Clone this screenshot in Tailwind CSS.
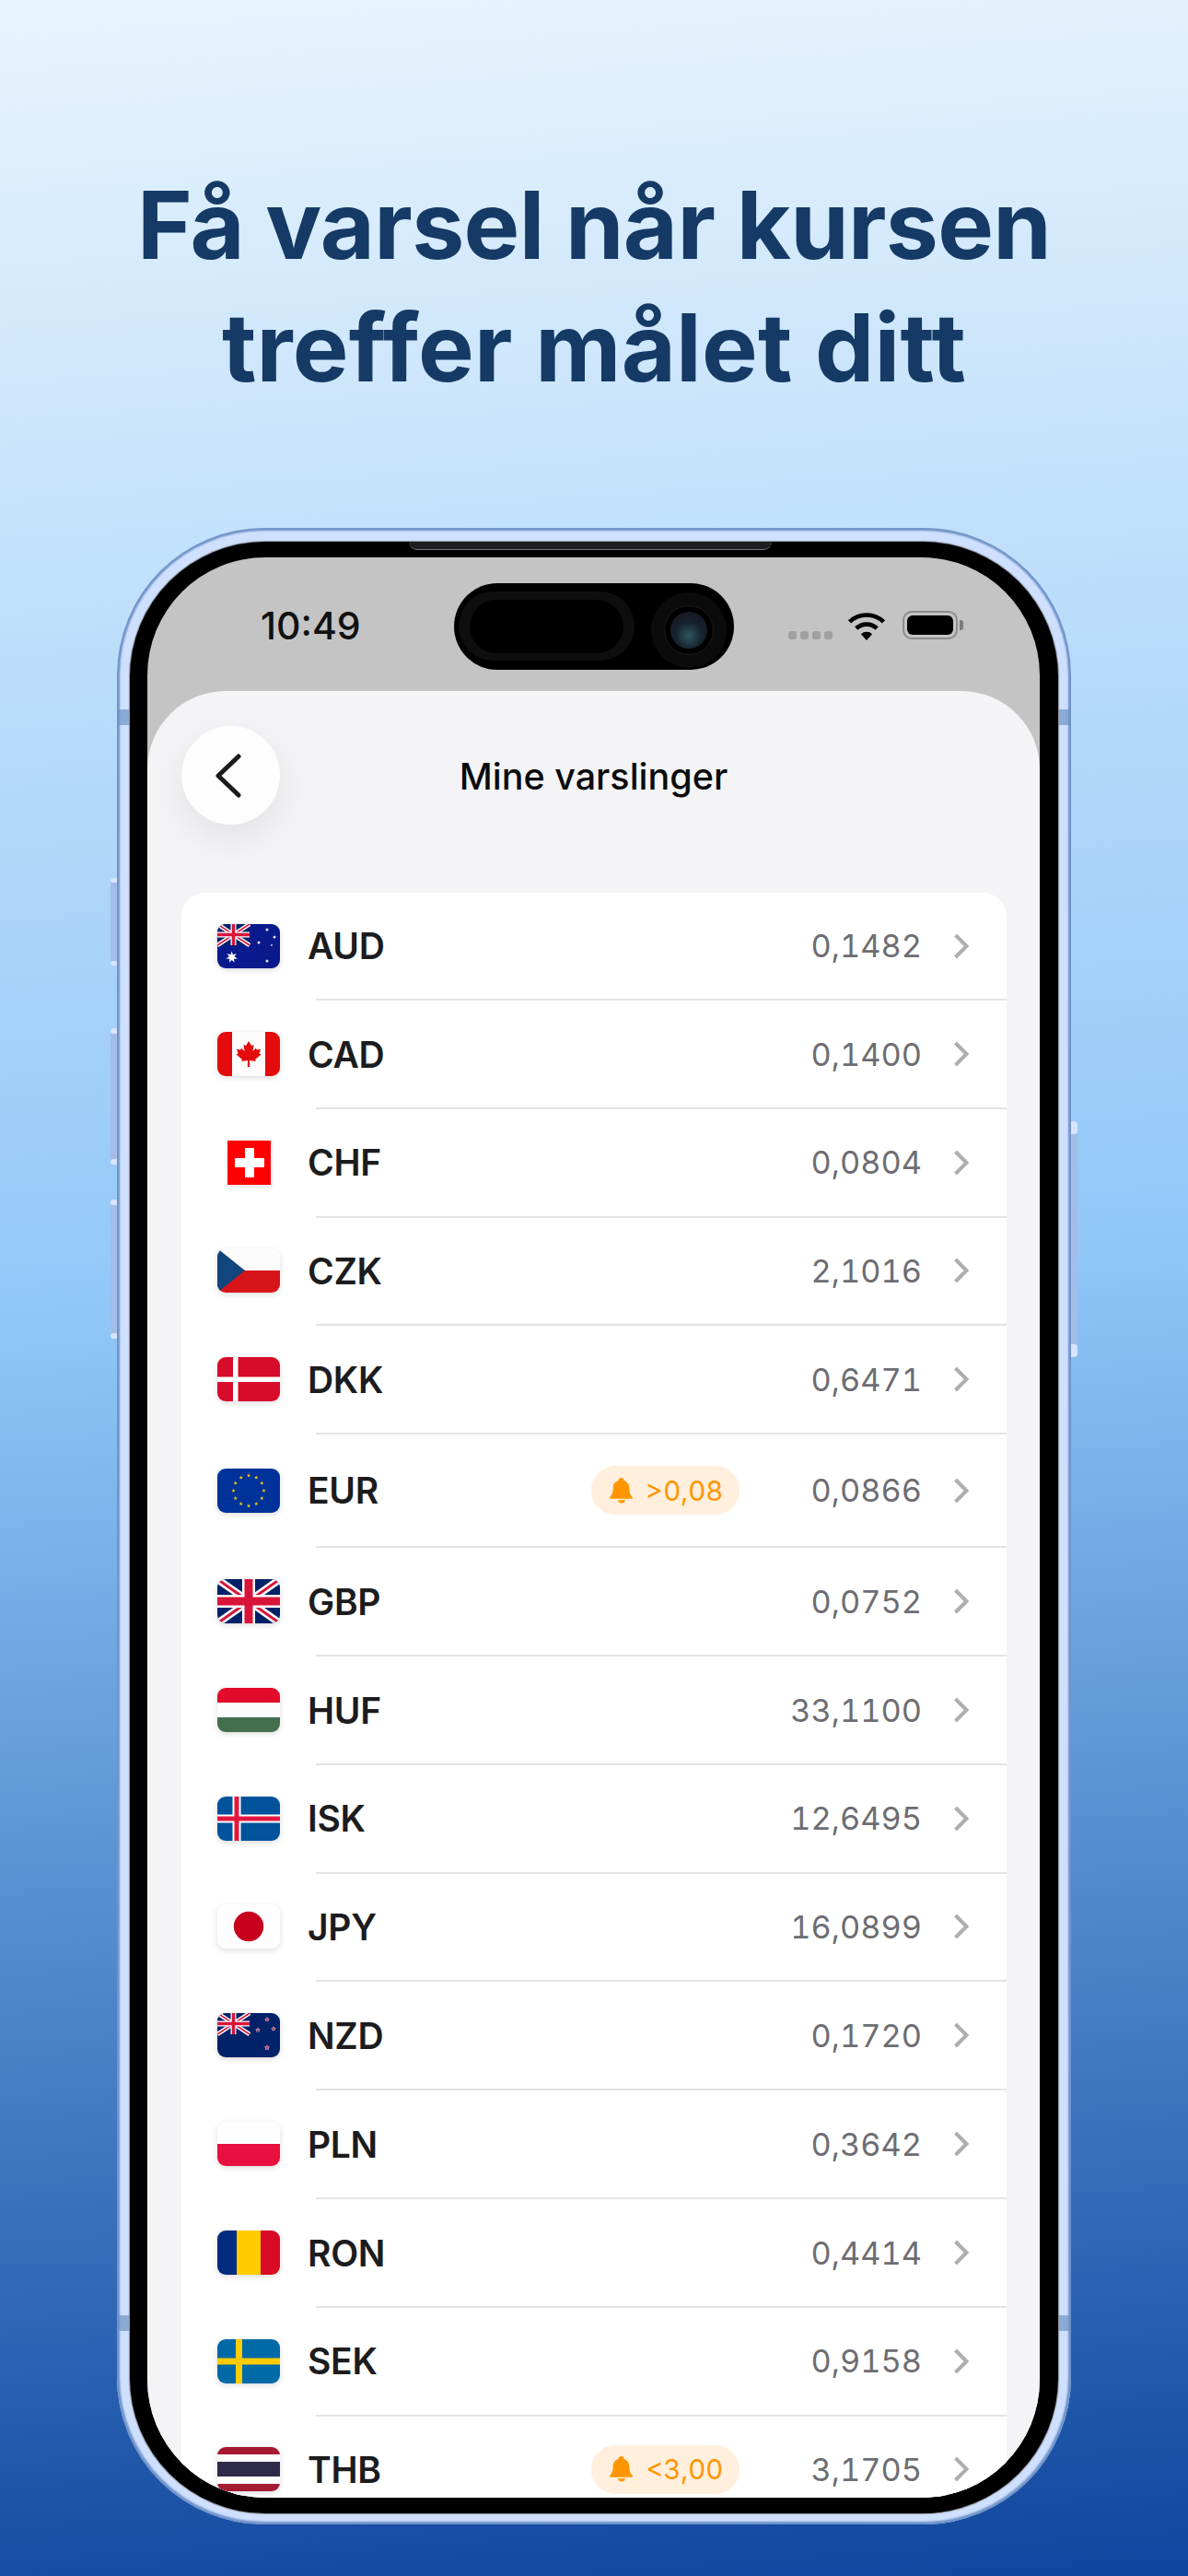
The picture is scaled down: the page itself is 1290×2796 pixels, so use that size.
<!DOCTYPE html>
<html lang="en">
<head>
  <meta charset="UTF-8" />
  <title>Mine varslinger</title>
  <script src="https://cdn.jsdelivr.net/npm/@tailwindcss/browser@4"></script>
</head>
<body class="m-0 font-['Inter',sans-serif]">
  <div class="w-[1290px] h-[2796px] overflow-hidden bg-[linear-gradient(176deg,#e8f4fd_0%,#90c7f8_50%,#0f459d_100%)]">
    <h1 class="h-[573px] pt-[178px] text-center text-[102px] leading-[133px] font-bold text-[#153a66]"><span class="block tracking-[-0.7px]">Få varsel når kursen</span><span class="block tracking-[0.25px]">treffer målet ditt</span></h1>

    <!-- phone -->
    <div class="relative ml-[127px] w-[1036px] h-[2167px] rounded-[160px] bg-[#cfe0ff] pt-[15px] px-[14px] pb-[12px] shadow-[inset_0_0_2px_3px_#6f93c8]">
      <!-- side buttons -->
      <div class="absolute left-[-7px] top-[380px] w-[7px] h-[95px] rounded-l-[4px] bg-[#a4bde8] flex flex-col justify-between"><div class="h-[5px] rounded-l-[4px] bg-[#d8e5fc]"></div><div class="h-[5px] rounded-l-[4px] bg-[#d8e5fc]"></div></div>
      <div class="absolute left-[-7px] top-[543px] w-[7px] h-[148px] rounded-l-[4px] bg-[#a4bde8] flex flex-col justify-between"><div class="h-[6px] rounded-l-[4px] bg-[#d8e5fc]"></div><div class="h-[6px] rounded-l-[4px] bg-[#d8e5fc]"></div></div>
      <div class="absolute left-[-7px] top-[729px] w-[7px] h-[151px] rounded-l-[4px] bg-[#a4bde8] flex flex-col justify-between"><div class="h-[6px] rounded-l-[4px] bg-[#d8e5fc]"></div><div class="h-[6px] rounded-l-[4px] bg-[#d8e5fc]"></div></div>
      <div class="absolute right-[-7px] top-[644px] w-[7px] h-[256px] rounded-r-[4px] bg-[#a4bde8] flex flex-col justify-between"><div class="h-[14px] rounded-r-[4px] bg-[#d8e5fc]"></div><div class="h-[14px] rounded-r-[4px] bg-[#d8e5fc]"></div></div>
      <!-- antenna bands -->
      <div class="absolute left-0 top-[197px] w-[13px] h-[17px] bg-[#6d93c4]/70"></div>
      <div class="absolute right-0 top-[197px] w-[13px] h-[17px] bg-[#6d93c4]/70"></div>
      <div class="absolute left-0 bottom-[210px] w-[13px] h-[17px] bg-[#6d93c4]/70"></div>
      <div class="absolute right-0 bottom-[210px] w-[13px] h-[17px] bg-[#6d93c4]/70"></div>
      <!-- speaker -->
      <div class="absolute left-[317px] top-[15px] w-[394px] h-[9px] rounded-b-[12px] bg-[#1e1e20] border-b border-[#77777a]"></div>

      <div class="h-full rounded-[147px] bg-black pt-[17px] pb-[17px] pl-[19px] pr-[20px] shadow-[0_0_1px_1px_#8b8f96]">
        <div class="relative h-full overflow-hidden rounded-[128px] bg-[#c4c4c5]">
          <!-- status bar -->
          <div class="relative h-[145px]">
            <div class="absolute left-[123px] top-[52px] text-[41px] leading-[44px] font-medium text-[#111]">10:49</div>
            <div class="absolute left-[333px] top-[28px] w-[304px] h-[94px] rounded-[47px] bg-black">
              <div class="absolute left-[5px] top-[9px] w-[191px] h-[75px] rounded-[38px] bg-[#0e0e0e] flex items-center justify-center"><div class="w-[167px] h-[58px] rounded-[29px] bg-black"></div></div>
              <div class="absolute left-[214px] top-[10px] w-[82px] h-[82px] rounded-full bg-[#0b0b0b] flex items-center justify-center">
                <div class="w-[54px] h-[54px] rounded-full border border-[#1c1c1e] bg-black flex items-center justify-center"><div class="w-[40px] h-[40px] rounded-full bg-[radial-gradient(circle_at_50%_65%,#2f5560_0%,#16222c_45%,#17131c_100%)]"></div></div>
              </div>
            </div>
            <div class="absolute left-[696px] top-[80px] flex gap-[4px]">
              <div class="w-[9px] h-[9px] rounded-[3px] bg-[#a0a0a1]"></div>
              <div class="w-[9px] h-[9px] rounded-[3px] bg-[#a0a0a1]"></div>
              <div class="w-[9px] h-[9px] rounded-[3px] bg-[#a0a0a1]"></div>
              <div class="w-[9px] h-[9px] rounded-[3px] bg-[#a0a0a1]"></div>
            </div>
            <svg class="absolute left-[760px] top-[58px]" width="42" height="32" viewBox="0 0 41 31" fill="none" stroke="#000" stroke-width="4.6">
              <path d="M2.5 11.5A26 26 0 0 1 38.5 11.5" />
              <path d="M9.5 18.5A16 16 0 0 1 31.5 18.5" />
              <path d="M14.5 24.5A9 9 0 0 1 26.5 24.5L20.5 31Z" fill="#000" stroke="none" />
            </svg>
            <div class="absolute left-[820px] top-[58px] w-[60px] h-[31px] rounded-[10px] border-2 border-[#8c8c8e] p-[3px]"><div class="h-full rounded-[6px] bg-black"></div></div>
            <div class="absolute left-[882px] top-[68px] w-[4px] h-[11px] rounded-r-[3px] bg-[#7d7d7f]"></div>
          </div>

          <!-- sheet -->
          <div class="h-full rounded-t-[85px] bg-[#f4f4f6]">
            <div class="relative h-[219px] flex justify-center pt-[69px]">
              <button class="absolute left-[37px] top-[38px] w-[107px] h-[107px] rounded-full bg-[#fdfdfe] shadow-[0_14px_44px_rgba(0,0,0,0.08)] flex items-center justify-center">
                <svg class="mr-[6px]" width="30" height="48" viewBox="0 0 30 48" fill="none" stroke="#1c1c1e" stroke-width="5" stroke-linecap="round" stroke-linejoin="round"><path d="M26 3 4 24l22 21" /></svg>
              </button>
              <div class="text-[39.5px] leading-[48px] font-medium text-[#0b0b0d]">Mine varslinger</div>
            </div>
            <div id="list" class="ml-[37px] w-[896px] rounded-t-[26px] bg-white"></div>
          </div>
        </div>
      </div>
    </div>
  </div>

  <script>
    // 5 point star as polygon points
    const star = (cx, cy, r, fill, n = 5, inner = 0.42) => {
      let pts = [];
      for (let i = 0; i < n * 2; i++) {
        const a = -Math.PI / 2 + i * Math.PI / n;
        const rad = i % 2 ? r * inner : r;
        pts.push((cx + rad * Math.cos(a)).toFixed(2) + ',' + (cy + rad * Math.sin(a)).toFixed(2));
      }
      return `<polygon points="${pts.join(' ')}" fill="${fill}" />`;
    };
    const rect = (x, y, w, h, fill) => `<rect x="${x}" y="${y}" width="${w}" height="${h}" fill="${fill}" />`;
    const union = (w, h, cw, cr, dw, dr) => `
      ${rect(0, 0, w, h, '#012169')}
      <path d="M0 0L${w} ${h}M${w} 0L0 ${h}" stroke="#fff" stroke-width="${dw}" />
      <path d="M0 0L${w} ${h}M${w} 0L0 ${h}" stroke="#d8143a" stroke-width="${dr}" />
      ${rect(w / 2 - cw / 2, 0, cw, h, '#fff')}${rect(0, h / 2 - cw / 2, w, cw, '#fff')}
      ${rect(w / 2 - cr / 2, 0, cr, h, '#d8143a')}${rect(0, h / 2 - cr / 2, w, cr, '#d8143a')}`;

    const euStars = () => {
      let s = '';
      for (let i = 0; i < 12; i++) {
        const a = i * Math.PI / 6;
        s += star(34 + 16.5 * Math.cos(a), 24 + 16.5 * Math.sin(a), 2.2, '#ffcc00');
      }
      return s;
    };
    const nzStar = (x, y, r) => star(x, y, r + 0.7, '#fff') + star(x, y, r, '#cc3350');

    const flags = {
      AUD: rect(0, 0, 68, 48, '#0a1a8c') + union(35, 23, 6, 3.5, 4.5, 1.6) + star(15.7, 36, 6.5, '#fff', 7, 0.45) + star(54, 6, 2.2, '#fff', 7) + star(62, 14, 2.2, '#fff', 7) + star(45, 20, 2.2, '#fff', 7) + star(59, 23, 1.4, '#fff') + star(54, 40, 2.2, '#fff', 7),
      CAD: rect(0, 0, 68, 48, '#fcfcfc') + rect(0, 0, 16, 48, '#e30b0b') + rect(52, 0, 16, 48, '#e30b0b') + '<polygon fill="#e30b0b" points="34,10 37,15 39.5,13.8 38.5,21 42,17.5 42.8,19.5 47,18.8 45.5,23.5 47.5,24.5 41,30 41.8,32 35,31 35.2,38 32.8,38 33,31 26.2,32 27,30 20.5,24.5 22.5,23.5 21,18.8 25.2,19.5 26,17.5 29.5,21 28.5,13.8 31,15" />',
      CZK: rect(0, 0, 68, 24, '#fcfcfc') + rect(0, 24, 68, 24, '#d7141a') + '<polygon points="0,0 30,24 0,48" fill="#11457e" />',
      DKK: rect(0, 0, 68, 48, '#d80b2a') + rect(17, 0, 5.5, 48, '#fff') + rect(0, 21.5, 68, 5.5, '#fff'),
      EUR: rect(0, 0, 68, 48, '#003399') + euStars(),
      GBP: union(68, 48, 14, 9, 8, 3),
      HUF: rect(0, 0, 68, 16, '#e30b2c') + rect(0, 16, 68, 16, '#fcfcfc') + rect(0, 32, 68, 16, '#436f4d'),
      ISK: rect(0, 0, 68, 48, '#02529c') + rect(16.5, 0, 9, 48, '#fff') + rect(0, 19.5, 68, 9, '#fff') + rect(18.5, 0, 5, 48, '#e3173e') + rect(0, 21.5, 68, 5, '#e3173e'),
      JPY: rect(0, 0, 68, 48, '#fdfdfd') + '<circle cx="34" cy="24" r="16.2" fill="#c8001e" />',
      NZD: rect(0, 0, 68, 48, '#012169') + union(35, 23, 6, 3.5, 4.5, 1.6) + nzStar(54, 7, 2.2) + nzStar(44, 18.5, 2.2) + nzStar(61, 17, 2.2) + nzStar(54, 37.5, 2.6),
      PLN: rect(0, 0, 68, 24, '#fdfdfd') + rect(0, 24, 68, 24, '#e8103f'),
      RON: rect(0, 0, 21, 48, '#002b7f') + rect(21, 0, 26, 48, '#ffcc00') + rect(47, 0, 21, 48, '#d80a24'),
      SEK: rect(0, 0, 68, 48, '#006aa7') + rect(20, 0, 7, 48, '#fecc00') + rect(0, 20.5, 68, 7, '#fecc00'),
      THB: rect(0, 0, 68, 8, '#a51931') + rect(0, 8, 68, 8, '#fcfcfc') + rect(0, 16, 68, 16, '#2d2a4a') + rect(0, 32, 68, 8, '#fcfcfc') + rect(0, 40, 68, 8, '#a51931'),
    };

    const swiss = `<div class="w-[68px] flex justify-center"><div class="relative w-[47px] h-[48px] bg-[#fe0000] shadow-[0_2px_5px_rgba(0,0,0,0.12)]"><div class="absolute left-[19px] top-[8px] w-[10px] h-[32px] bg-white"></div><div class="absolute left-[8px] top-[19px] w-[32px] h-[10px] bg-white"></div></div></div>`;

    const flagHtml = code => code === 'CHF' ? swiss : `
      <div class="w-[68px] h-[48px] rounded-[9px] overflow-hidden shadow-[0_2px_6px_rgba(0,0,0,0.14)]">
        <svg width="68" height="48" viewBox="0 0 68 48" class="block">${flags[code]}</svg>
      </div>`;

    const bell = `<svg width="26" height="28" viewBox="0 0 26 28" fill="#ff9500"><path d="M13 0c1.4 0 2.3 1 2.3 2.2v.7c3.9 1 6 4.2 6 8.2 0 5.300 1.100 7.300 3.200 9.700.8.900.3 1.900-.8 1.900H1.300C.2 22.700-.3 21.700.5 20.800c2.100-2.400 3.200-4.400 3.200-9.700 0-4 2.100-7.200 6-8.200v-.7C9.700 1 11.600 0 13 0z" /><path d="M9 24.200h8c-.3 2-1.900 3.300-4 3.300s-3.700-1.300-4-3.300z" /></svg>`;

    const rows = [
      { code: 'AUD', value: '0,1482', h: 'h-[115px]' },
      { code: 'CAD', value: '0,1400', h: 'h-[115.8px]' },
      { code: 'CHF', value: '0,0804', h: 'h-[115.8px]' },
      { code: 'CZK', value: '2,1016', h: 'h-[115.8px]' },
      { code: 'DKK', value: '0,6471', h: 'h-[115.8px]' },
      { code: 'EUR', value: '0,0866', h: 'h-[121px]', alert: '>0,08' },
      { code: 'GBP', value: '0,0752', h: 'h-[115.8px]' },
      { code: 'HUF', value: '33,1100', h: 'h-[115.8px]' },
      { code: 'ISK', value: '12,6495', h: 'h-[115.8px]' },
      { code: 'JPY', value: '16,0899', h: 'h-[115.8px]' },
      { code: 'NZD', value: '0,1720', h: 'h-[115.8px]' },
      { code: 'PLN', value: '0,3642', h: 'h-[115.8px]' },
      { code: 'RON', value: '0,4414', h: 'h-[115.8px]' },
      { code: 'SEK', value: '0,9158', h: 'h-[115.8px]' },
      { code: 'THB', value: '3,1705', h: 'h-[115.8px]', alert: '<3,00' },
    ];

    document.getElementById('list').innerHTML = rows.map((r, i) => `
      ${i ? '<div class="ml-[146px] h-[2px] bg-[#e4e4e6]"></div>' : ''}
      <div class="${r.h} flex items-center pl-[39px] pr-[40px]">
        ${flagHtml(r.code)}
        <div class="ml-[30px] mt-[2px] text-[39px] font-semibold tracking-[-0.3px] text-[#1c1c1e]">${r.code}</div>
        <div class="flex-1"></div>
        ${r.alert ? `<div class="h-[53px] w-[161px] rounded-full bg-[#ffefdc] flex items-center pl-[20px] gap-[13px] text-[29.5px] tabular-nums text-[#ff9500]">${bell}<span>${r.alert.replace('<', '&lt;')}</span></div>` : ''}
        <div class="w-[198px] mt-[1px] text-right text-[34.3px] tabular-nums text-[#6d6d72]">${r.value}</div>
        <svg class="ml-[34px]" width="18" height="28" viewBox="0 0 18 28" fill="none" stroke="#aeaeb2" stroke-width="4"><path d="M2.500 2 14.500 14l-12 12" /></svg>
      </div>`).join('');
  </script>
</body>
</html>
